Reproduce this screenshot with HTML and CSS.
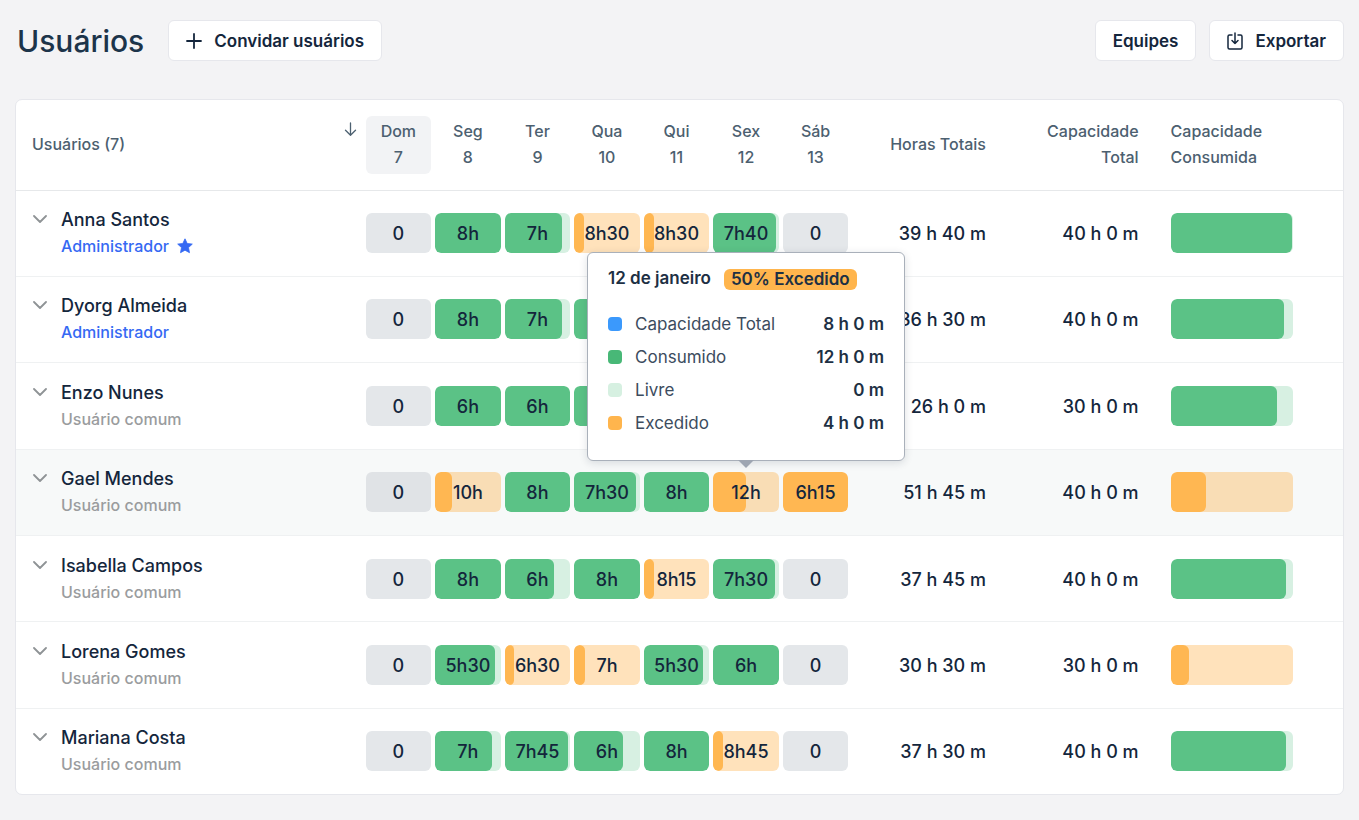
FILE: index.html
```html
<!DOCTYPE html>
<html lang="pt-BR">
<head>
<meta charset="utf-8">
<title>Usuários</title>
<link rel="stylesheet" href="styles.css">
</head>
<body>
<svg class="sprite" aria-hidden="true">
  <symbol id="chevron" viewBox="0 0 14 8"><path d="M1 1l6 6 6-6" fill="none" stroke="currentColor" stroke-width="1.800" stroke-linecap="round" stroke-linejoin="round"/></symbol>
</svg>
<header class="topbar">
  <h1 class="title">Usuários</h1>
  <button class="btn" type="button">
    <svg class="icon-plus" viewBox="0 0 16 16" aria-hidden="true"><path d="M8 1v14M1 8h14" fill="none" stroke="currentColor" stroke-width="1.800" stroke-linecap="round"/></svg>
    Convidar usuários
  </button>
  <div class="actions">
    <button class="btn" type="button">Equipes</button>
    <button class="btn" type="button">
      <svg class="icon-export" viewBox="0 0 16 18" aria-hidden="true"><path d="M5 3H2.500Q1 3 1 4.500V15.500Q1 17 2.500 17H13.500Q15 17 15 15.500V4.500Q15 3 13.500 3H11M8 1v10.500M5 8.500l3 3 3-3" fill="none" stroke="currentColor" stroke-width="1.500" stroke-linecap="round" stroke-linejoin="round"/></svg>
      Exportar
    </button>
  </div>
</header>
<main class="card">
<table class="grid">
  <colgroup>
    <col class="col-user"><col class="col-day" span="7"><col class="col-hours"><col class="col-capacity"><col class="col-used"><col class="col-end">
  </colgroup>
  <thead>
    <tr>
      <th scope="col" class="user-head"><div class="user-head-inner"><span>Usuários (7)</span><button class="sort" type="button" aria-label="Ordenar"><svg class="icon-sort" viewBox="0 0 12 14" aria-hidden="true"><path d="M6 1v12M1 8.200l5 5 5-5" fill="none" stroke="currentColor" stroke-width="1.300" stroke-linecap="round" stroke-linejoin="round"/></svg></button></div></th>
      <th scope="col" class="day"><div class="day-head today">Dom<br>7</div></th>
      <th scope="col" class="day"><div class="day-head">Seg<br>8</div></th>
      <th scope="col" class="day"><div class="day-head">Ter<br>9</div></th>
      <th scope="col" class="day"><div class="day-head">Qua<br>10</div></th>
      <th scope="col" class="day"><div class="day-head">Qui<br>11</div></th>
      <th scope="col" class="day"><div class="day-head">Sex<br>12</div></th>
      <th scope="col" class="day"><div class="day-head">Sáb<br>13</div></th>
      <th scope="col" class="num">Horas Totais</th>
      <th scope="col" class="num">Capacidade<br>Total</th>
      <th scope="col" class="used">Capacidade<br>Consumida</th>
      <td></td>
    </tr>
  </thead>
  <tbody>
    <tr>
      <th scope="row" class="user"><div class="user-inner"><button class="toggle" type="button" aria-label="Expandir Anna Santos"><svg class="icon-chevron"><use href="#chevron"/></svg></button><div><div class="name">Anna Santos</div><div class="role admin">Administrador <svg class="icon-star" viewBox="0 0 16 16" aria-hidden="true"><path d="M8 .8l2.200 4.700 5.100.6-3.800 3.500 1 5.100L8 12.200l-4.500 2.500 1-5.100L.7 6.100l5.100-.6z" fill="currentColor" stroke="currentColor" stroke-width=".8" stroke-linejoin="round"/></svg></div></div></div></th>
      <td class="day"><div class="chip off"><span>0</span></div></td>
      <td class="day"><div class="chip free"><i style="width:100%"></i><span>8h</span></div></td>
      <td class="day"><div class="chip free"><i style="width:87%"></i><span>7h</span></div></td>
      <td class="day"><div class="chip over"><i style="width:15%"></i><span>8h30</span></div></td>
      <td class="day"><div class="chip over"><i style="width:15%"></i><span>8h30</span></div></td>
      <td class="day"><div class="chip free"><i style="width:95%"></i><span>7h40</span></div></td>
      <td class="day"><div class="chip off"><span>0</span></div></td>
      <td class="num">39 h 40 m</td><td class="num">40 h 0 m</td>
      <td class="used"><div class="chip free"><i style="width:99%"></i></div></td><td></td>
    </tr>
    <tr>
      <th scope="row" class="user"><div class="user-inner"><button class="toggle" type="button" aria-label="Expandir Dyorg Almeida"><svg class="icon-chevron"><use href="#chevron"/></svg></button><div><div class="name">Dyorg Almeida</div><div class="role admin">Administrador</div></div></div></th>
      <td class="day"><div class="chip off"><span>0</span></div></td>
      <td class="day"><div class="chip free"><i style="width:100%"></i><span>8h</span></div></td>
      <td class="day"><div class="chip free"><i style="width:87%"></i><span>7h</span></div></td>
      <td class="day"><div class="chip free"><i style="width:100%"></i></div></td>
      <td class="day"><div class="chip free"><i style="width:87%"></i></div></td>
      <td class="day"><div class="chip free"><i style="width:87%"></i></div></td>
      <td class="day"><div class="chip off"></div></td>
      <td class="num">36 h 30 m</td><td class="num">40 h 0 m</td>
      <td class="used"><div class="chip free"><i style="width:92%"></i></div></td><td></td>
    </tr>
    <tr>
      <th scope="row" class="user"><div class="user-inner"><button class="toggle" type="button" aria-label="Expandir Enzo Nunes"><svg class="icon-chevron"><use href="#chevron"/></svg></button><div><div class="name">Enzo Nunes</div><div class="role">Usuário comum</div></div></div></th>
      <td class="day"><div class="chip off"><span>0</span></div></td>
      <td class="day"><div class="chip free"><i style="width:100%"></i><span>6h</span></div></td>
      <td class="day"><div class="chip free"><i style="width:100%"></i><span>6h</span></div></td>
      <td class="day"><div class="chip free"><i style="width:83%"></i></div></td>
      <td class="day"><div class="chip free"><i style="width:83%"></i></div></td>
      <td class="day"><div class="chip free"><i style="width:67%"></i></div></td>
      <td class="day"><div class="chip off"></div></td>
      <td class="num">26 h 0 m</td><td class="num">30 h 0 m</td>
      <td class="used"><div class="chip free"><i style="width:87%"></i></div></td><td></td>
    </tr>
    <tr class="active">
      <th scope="row" class="user"><div class="user-inner"><button class="toggle" type="button" aria-label="Expandir Gael Mendes"><svg class="icon-chevron"><use href="#chevron"/></svg></button><div><div class="name">Gael Mendes</div><div class="role">Usuário comum</div></div></div></th>
      <td class="day"><div class="chip off"><span>0</span></div></td>
      <td class="day"><div class="chip over"><i style="width:25%"></i><span>10h</span></div></td>
      <td class="day"><div class="chip free"><i style="width:100%"></i><span>8h</span></div></td>
      <td class="day"><div class="chip free"><i style="width:94%"></i><span>7h30</span></div></td>
      <td class="day"><div class="chip free"><i style="width:100%"></i><span>8h</span></div></td>
      <td class="day">
        <div class="tip-anchor">
          <div class="chip over"><i style="width:50%"></i><span>12h</span></div>
          <div class="tip" role="tooltip">
            <div class="tip-head"><span class="tip-date">12 de janeiro</span><span class="badge">50% Excedido</span></div>
            <dl class="tip-list">
              <div class="tip-row"><dt class="total">Capacidade Total</dt><dd>8 h 0 m</dd></div>
              <div class="tip-row"><dt class="spent">Consumido</dt><dd>12 h 0 m</dd></div>
              <div class="tip-row"><dt class="left">Livre</dt><dd>0 m</dd></div>
              <div class="tip-row"><dt class="extra">Excedido</dt><dd>4 h 0 m</dd></div>
            </dl>
          </div>
        </div>
      </td>
      <td class="day"><div class="chip over"><i style="width:100%"></i><span>6h15</span></div></td>
      <td class="num">51 h 45 m</td><td class="num">40 h 0 m</td>
      <td class="used"><div class="chip over"><i style="width:29%"></i></div></td><td></td>
    </tr>
    <tr>
      <th scope="row" class="user"><div class="user-inner"><button class="toggle" type="button" aria-label="Expandir Isabella Campos"><svg class="icon-chevron"><use href="#chevron"/></svg></button><div><div class="name">Isabella Campos</div><div class="role">Usuário comum</div></div></div></th>
      <td class="day"><div class="chip off"><span>0</span></div></td>
      <td class="day"><div class="chip free"><i style="width:100%"></i><span>8h</span></div></td>
      <td class="day"><div class="chip free"><i style="width:75%"></i><span>6h</span></div></td>
      <td class="day"><div class="chip free"><i style="width:100%"></i><span>8h</span></div></td>
      <td class="day"><div class="chip over"><i style="width:15%"></i><span>8h15</span></div></td>
      <td class="day"><div class="chip free"><i style="width:94%"></i><span>7h30</span></div></td>
      <td class="day"><div class="chip off"><span>0</span></div></td>
      <td class="num">37 h 45 m</td><td class="num">40 h 0 m</td>
      <td class="used"><div class="chip free"><i style="width:94%"></i></div></td><td></td>
    </tr>
    <tr>
      <th scope="row" class="user"><div class="user-inner"><button class="toggle" type="button" aria-label="Expandir Lorena Gomes"><svg class="icon-chevron"><use href="#chevron"/></svg></button><div><div class="name">Lorena Gomes</div><div class="role">Usuário comum</div></div></div></th>
      <td class="day"><div class="chip off"><span>0</span></div></td>
      <td class="day"><div class="chip free"><i style="width:91%"></i><span>5h30</span></div></td>
      <td class="day"><div class="chip over"><i style="width:15%"></i><span>6h30</span></div></td>
      <td class="day"><div class="chip over"><i style="width:16%"></i><span>7h</span></div></td>
      <td class="day"><div class="chip free"><i style="width:91%"></i><span>5h30</span></div></td>
      <td class="day"><div class="chip free"><i style="width:100%"></i><span>6h</span></div></td>
      <td class="day"><div class="chip off"><span>0</span></div></td>
      <td class="num">30 h 30 m</td><td class="num">30 h 0 m</td>
      <td class="used"><div class="chip over"><i style="width:15%"></i></div></td><td></td>
    </tr>
    <tr>
      <th scope="row" class="user"><div class="user-inner"><button class="toggle" type="button" aria-label="Expandir Mariana Costa"><svg class="icon-chevron"><use href="#chevron"/></svg></button><div><div class="name">Mariana Costa</div><div class="role">Usuário comum</div></div></div></th>
      <td class="day"><div class="chip off"><span>0</span></div></td>
      <td class="day"><div class="chip free"><i style="width:87%"></i><span>7h</span></div></td>
      <td class="day"><div class="chip free"><i style="width:96%"></i><span>7h45</span></div></td>
      <td class="day"><div class="chip free"><i style="width:75%"></i><span>6h</span></div></td>
      <td class="day"><div class="chip free"><i style="width:100%"></i><span>8h</span></div></td>
      <td class="day"><div class="chip over"><i style="width:15%"></i><span>8h45</span></div></td>
      <td class="day"><div class="chip off"><span>0</span></div></td>
      <td class="num">37 h 30 m</td><td class="num">40 h 0 m</td>
      <td class="used"><div class="chip free"><i style="width:94%"></i></div></td><td></td>
    </tr>
  </tbody>
</table>
</main>
</body>
</html>
```
FILE: styles.css
```css
* { box-sizing: border-box; }

body {
  margin: 0;
  padding: 20px 15px 24px;
  background: #f3f3f5;
  color: #14263c;
  font-family: Inter, "Liberation Sans", sans-serif;
  font-size: 18px;
  line-height: 26px;
}

button { font: inherit; color: inherit; cursor: pointer; }
.sprite { display: none; }

/* Top bar */
.topbar { display: flex; align-items: center; margin-bottom: 38px; }
.title {
  margin: 0 24px 0 2px;
  color: #1c344a;
  font-size: 30px;
  font-weight: 500;
  line-height: 40px;
}
.btn {
  display: flex;
  align-items: center;
  gap: 12px;
  height: 41px;
  padding: 0 17px;
  border: 1px solid #e6e7ec;
  border-radius: 6px;
  background: #fff;
  font-size: 17px;
  font-weight: 600;
}
.actions { display: flex; gap: 13px; margin-left: auto; }
.icon-plus { width: 16px; height: 16px; }
.icon-export { width: 16px; height: 18px; }

/* Table */
.card {
  border: 1px solid #e6e7ec;
  border-radius: 7px;
  background: #fff;
}
.grid {
  width: 100%;
  height: calc(100vh - 126px);
  border-spacing: 0;
  table-layout: fixed;
}
.col-day { width: 5.24%; }
.col-hours { width: 11.43%; }
.col-capacity { width: 11.5%; }
.col-used { width: 11.67%; }
.col-end { width: 2.53%; }

.grid th, .grid td { padding: 0; font-weight: 500; text-align: left; }
.grid thead th, .grid thead td {
  height: 91px;
  border-bottom: 1px solid #e6e8ea;
  color: #4c6070;
  font-size: 16px;
}
.grid tbody tr + tr > * { border-top: 1px solid #eff1f2; }
.grid .day { padding: 0 2px; text-align: center; }
.grid .num { padding-right: 16px; text-align: right; white-space: nowrap; }
.grid tbody .num { padding-top: 2px; }
.grid .used { padding: 0 16px; }
.grid thead .num, .grid thead .used { padding-bottom: 2px; }

.user-head-inner {
  display: flex;
  align-items: center;
  justify-content: space-between;
  height: 58px;
  padding: 0 7px 2px 16px;
}
.sort {
  display: flex;
  align-self: flex-start;
  padding: 6px 0;
  border: 0;
  background: none;
}
.icon-sort { width: 13px; height: 14px; }
.day-head { padding: 2px 0 4px; border-radius: 6px; }
.today { background: #f2f3f5; }

.user-inner { display: flex; gap: 13px; padding: 0 16px; }
.toggle {
  display: flex;
  align-items: flex-start;
  height: 26px;
  padding: 9px 1px;
  border: 0;
  background: none;
  color: #8f9396;
}
.icon-chevron { width: 14px; height: 8px; }
.name { line-height: 27px; }
.role {
  display: flex;
  align-items: center;
  gap: 8px;
  color: #9a9c9e;
  font-size: 16px;
  line-height: 27px;
}
.admin { color: #3569f3; }
.icon-star { width: 16px; height: 16px; margin-bottom: 2px; }
.active { background: #f7f9f9; }

/* Hour chips */
.chip {
  position: relative;
  height: 40px;
  border-radius: 6px;
  overflow: hidden;
  line-height: 42px;
}
.chip i { position: absolute; inset: 0 auto 0 0; border-radius: 6px; }
.chip span { position: relative; }
.off { background: #e4e7ea; }
.free { background: #d7f0e2; }
.free i { background: #5bc286; }
.over { background: #ffe2bb; }
.over i { background: #ffb752; }
.active .off { background: #e0e3e6; }
.active .over { background: #f9ddb5; }

/* Day tooltip */
.tip-anchor { position: relative; }
.tip {
  position: absolute;
  bottom: calc(100% + 11px);
  left: 50%;
  z-index: 1;
  width: 318px;
  padding: 12px 20px 24px;
  border: 1px solid #a9b0ba;
  border-radius: 6px;
  background: #fff;
  box-shadow: 0 2px 8px rgba(20, 38, 60, .14);
  color: #1d3044;
  transform: translateX(-50%);
  text-align: left;
  font-size: 17px;
}
.tip::after {
  content: "";
  position: absolute;
  top: 100%;
  left: 50%;
  border: 8px solid transparent;
  border-top-color: #9ea6b2;
  border-bottom: 0;
  transform: translateX(-50%);
}
.tip-head { display: flex; align-items: center; gap: 13px; margin-bottom: 20px; font-weight: 600; }
.tip-date { line-height: 26px; white-space: nowrap; }
.badge {
  margin-top: 2px;
  padding: 0 7px;
  border-radius: 6px;
  background: #ffb54d;
  line-height: 21px;
  white-space: nowrap;
}
.tip-list { display: flex; flex-direction: column; gap: 7px; margin: 0; }
.tip-row { display: flex; justify-content: space-between; }
.tip-row dt { display: flex; align-items: center; gap: 13px; color: #3c4c5e; font-weight: 400; }
.tip-row dt::before { content: ""; width: 14px; height: 14px; border-radius: 4px; background: currentColor; }
.tip-row dd { margin: 0; font-weight: 600; }
.tip-row .total::before { background: #3b99fc; }
.tip-row .spent::before { background: #48b877; }
.tip-row .left::before { background: #d6f0e1; }
.tip-row .extra::before { background: #ffb54d; }
```
